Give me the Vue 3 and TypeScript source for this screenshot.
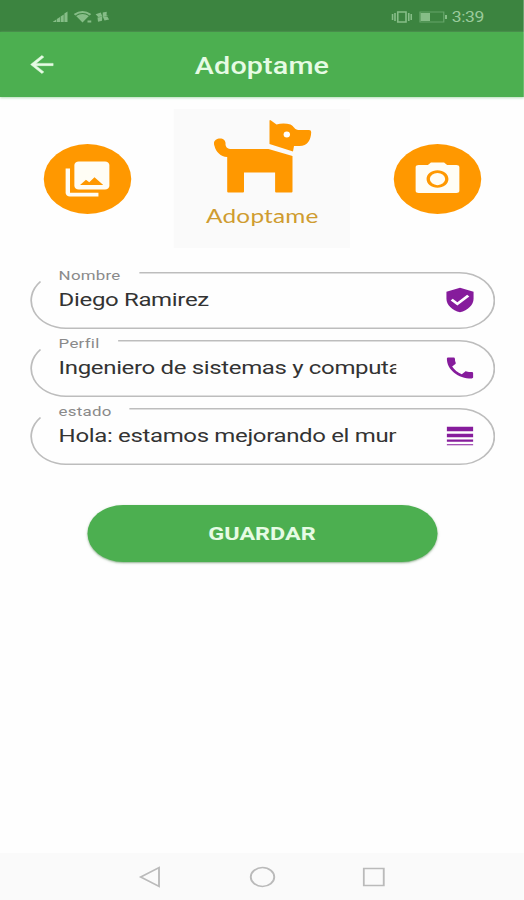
<script setup lang="ts">
interface Field {
  label: string
  value: string
  icon: string
  notch: number
}

const fields: Field[] = [
  {
    label: 'Nombre',
    value: 'Diego Ramirez',
    notch: 87.5,
    icon: 'M12 1.6 2.7 5v6c0 5.2 3.9 10 9.3 11.6 5.4-1.6 9.3-6.4 9.3-11.6V5L12 1.6zm-1.8 15.2-4.6-4.3 1.4-1.5 3.2 2.9 6.7-6.3L18.4 9l-8.2 7.8z',
  },
  {
    label: 'Perfil',
    value: 'Ingeniero de sistemas y computación',
    notch: 70.5,
    icon: 'M6.62 10.79c1.44 2.83 3.76 5.14 6.59 6.59l2.2-2.2c.27-.27.67-.36 1.02-.24 1.12.37 2.33.57 3.57.57.55 0 1 .45 1 1V20c0 .55-.45 1-1 1-9.39 0-17-7.61-17-17 0-.55.45-1 1-1h3.5c.55 0 1 .45 1 1 0 1.25.2 2.45.57 3.57.11.35.03.74-.25 1.02l-2.2 2.2z',
  },
  {
    label: 'estado',
    value: 'Hola: estamos mejorando el mundo',
    notch: 79.5,
    icon: 'M3 17h18v-2H3v2zm0 3h18v-1H3v1zm0-7h18v-3H3v3zm0-9v4h18V4H3z',
  },
]

const outline = (notch: number): string =>
  `M${notch} .7H343.5A28 27.8 0 0 1 343.5 56.3H28.7A28 27.8 0 0 1 8.4 9.6`
</script>

<template>
  <div class="viewport">
    <div class="screen">
      <div class="status">
        <div class="group">
          <svg width="13" height="13" viewBox="0 0 13 13">
            <path d="M0 12 3 9.5V12zM3.5 9 6 7v5H3.5zM6.5 6.4 9 4.4V12H6.5zM9.5 3.6 12 1.5V12H9.5z" />
          </svg>
          <svg class="wifi" width="15" height="14" viewBox="0 0 15 14">
            <path d="M0 4Q7 -2 14 4L12.8 5.4Q7 .8 1.2 5.4zM1.9 6Q7 1.8 12.1 6L7 12.5zM11 10.5h3v2h-3z" />
          </svg>
          <svg class="fan" width="12" height="12" viewBox="0 0 12 12">
            <path d="M.5 3.2 4.6 1.6 5.9 5.4 2.6 6zM6.2 1.5 9.4.8 9.2 4.4 11 4.8 6.2 5.4zM6.2 5.6 9.8 5.4 11.3 8.6 7.6 9.6zM2 6.6 5.8 5.8 5.6 9.8 2.4 10.8z" />
          </svg>
        </div>
        <div class="group">
          <svg width="17" height="14" viewBox="0 0 17 14">
            <path d="M1 4v6M3 3v8M14 3v8M16 4v6M5.2 2h6.6v10H5.2z" class="line" />
          </svg>
          <svg class="battery" width="23" height="12" viewBox="0 0 23 12">
            <path d="M1 1h19v10H1z" class="thin" /><path d="M1.5 2H9v8H1.5zM21 4h1.6v4H21z" />
          </svg>
          <span class="clock">3:39</span>
        </div>
      </div>
      <header class="appbar">
        <svg class="back" viewBox="0 0 24 24">
          <path d="M20 11H7.83l5.59-5.59L12 4l-8 8 8 8 1.41-1.41L7.83 13H20v-2z" />
        </svg>
        <h1>Adoptame</h1>
      </header>
      <main>
        <section class="hero">
          <button class="round" aria-label="Galería">
            <svg viewBox="0 0 24 24">
              <path d="M22 16V4c0-1.1-.9-2-2-2H8c-1.1 0-2 .9-2 2v12c0 1.1.9 2 2 2h12c1.1 0 2-.9 2-2zM8.6 15.4l2.7-3 1.5 1.4L15.2 11l4 4.4zM2 6v14c0 1.1.9 2 2 2h13v-2.2H4V6H2z" />
            </svg>
          </button>
          <div class="logo">
            <svg width="80" height="76" viewBox="0 0 100 76" preserveAspectRatio="none">
              <path d="M2 27C0 22 4 19.5 7.5 19.5C11 19.5 13.5 22 13 25C13 28 15 30 19 30H56L80 37V72.5Q80 73.5 79 73.5H63.6Q62.6 73.5 62.6 72.5V53.5H31.5V72.5Q31.5 73.5 30.5 73.5H15.7Q14.7 73.5 14.7 72.5V38C8 37.5 3.5 33 2 27z" />
              <path d="M57 2Q57 .5 58.5 1.5L64 5.5Q71 3.5 78 5.5C81.5 7 82 11 86 11H96.5Q98.7 11 98.7 13C98.5 21 95 27 87 27H81.5L80.5 32.5L57 25z" />
              <ellipse cx="74.3" cy="15.6" rx="3.2" ry="3" class="eye" />
            </svg>
            <span>Adoptame</span>
          </div>
          <button class="round" aria-label="Cámara">
            <svg viewBox="0 0 24 24">
              <path d="M9 2.6 7.6 4H3.4C2.6 4 2 4.5 2 5.3v13.4c0 .8.6 1.3 1.4 1.3h17.2c.8 0 1.4-.5 1.4-1.3V5.3C22 4.5 21.4 4 20.6 4h-4.2L15 2.6H9zm3 14.4c-2.76 0-5-2.24-5-5s2.24-5 5-5 5 2.24 5 5-2.24 5-5 5z" />
              <circle cx="12" cy="12" r="3.5" />
            </svg>
          </button>
        </section>
        <form class="fields">
          <div v-for="field in fields" :key="field.label" class="field">
            <svg class="outline" width="372" height="57" viewBox="0 0 372 57">
              <path :d="outline(field.notch)" />
            </svg>
            <div class="copy">
              <label>{{ field.label }}</label>
              <div class="value">{{ field.value }}</div>
            </div>
            <svg class="icon" viewBox="0 0 24 24"><path :d="field.icon" /></svg>
          </div>
        </form>
        <button class="save">GUARDAR</button>
      </main>
      <nav>
        <svg width="18" height="22" viewBox="0 0 18 22"><path d="M16.2 1.7v18.6L1.5 11z" /></svg>
        <svg width="22" height="22" viewBox="0 0 22 22"><circle cx="11" cy="11" r="9.4" /></svg>
        <svg width="18" height="22" viewBox="0 0 18 22"><path d="M1 2.5h16v17H1z" /></svg>
      </nav>
    </div>
  </div>
</template>

<style>
body {
  margin: 0;
  background: #fefefe;
}
</style>

<style scoped>
.viewport {
  width: 524px;
  height: 900px;
  overflow: hidden;
}
.screen {
  display: flex;
  flex-direction: column;
  width: 419.2px;
  height: 900px;
  transform: scaleX(1.25);
  transform-origin: 0 0;
  background: #fefefe;
  font-family: Roboto, "Liberation Sans", sans-serif;
}
svg {
  display: block;
  flex: none;
}
button {
  border: 0;
  padding: 0;
  font-family: inherit;
}
.status {
  box-sizing: border-box;
  display: flex;
  justify-content: space-between;
  align-items: center;
  height: 32px;
  padding: 1px 32px 0 42px;
  background: #3c8440;
  color: #9bcb9c;
  fill: #86bd87;
}
.group {
  display: flex;
  align-items: center;
}
.wifi {
  margin-left: 3.5px;
}
.fan {
  margin-left: 2.5px;
}
.line,
.thin {
  fill: none;
  stroke: #86bd87;
  stroke-width: 1.3;
}
.thin {
  stroke: #65a468;
  stroke-width: 1;
}
.battery {
  margin: 0 3px 0 5px;
}
.clock {
  font-size: 14px;
  line-height: 16px;
  letter-spacing: -0.3px;
}
.appbar {
  display: grid;
  grid-template-columns: 60px 1fr 60px;
  align-items: center;
  height: 65px;
  background: #4caf50;
  box-shadow: 0 1px 2px #b5dfb8;
}
.back {
  width: 27px;
  height: 27px;
  margin-left: 19.5px;
  fill: #e6fbe4;
  stroke: #e6fbe4;
  stroke-width: 0.4;
}
h1 {
  margin: 0;
  padding-top: 4px;
  text-align: center;
  font-size: 23px;
  line-height: 28px;
  font-weight: 500;
  letter-spacing: 0.1px;
  color: #e6fbe4;
}
main {
  flex: 1;
  display: flex;
  flex-direction: column;
}
.hero {
  display: flex;
  justify-content: space-between;
  padding: 12px 34.6px 0 35.2px;
}
.round {
  display: flex;
  align-items: center;
  justify-content: center;
  width: 70px;
  height: 70px;
  margin-top: 35px;
  border-radius: 50%;
  background: #ff9800;
}
.round svg {
  width: 42px;
  height: 42px;
  fill: #fffdf5;
}
.logo {
  display: flex;
  flex-direction: column;
  align-items: center;
  width: 141px;
  height: 139px;
  background: #fafafa;
}
.logo svg {
  margin-top: 10px;
  fill: #ff9800;
}
.logo .eye {
  fill: #fff;
}
.logo span {
  margin-top: 9px;
  font-family: Lato, sans-serif;
  font-size: 19.5px;
  line-height: 24px;
  letter-spacing: 0.15px;
  color: #cf9c30;
}
.fields {
  display: flex;
  flex-direction: column;
  gap: 11px;
  padding: 24px 23.6px 0;
}
.field {
  position: relative;
  display: flex;
  justify-content: space-between;
  height: 57px;
}
.outline {
  position: absolute;
  inset: 0;
  fill: none;
  stroke: #bdbdbd;
  stroke-width: 1.4;
}
.copy {
  width: 270.4px;
  margin-left: 23.3px;
}
label {
  display: block;
  margin-top: -5px;
  font-size: 13.5px;
  line-height: 16px;
  letter-spacing: 0.2px;
  color: #8a8a8a;
}
.value {
  margin-top: 3.5px;
  overflow: hidden;
  white-space: nowrap;
  font-size: 19.2px;
  line-height: 26px;
  letter-spacing: -0.27px;
  color: #333;
}
.icon {
  width: 28px;
  height: 28px;
  margin: 14px 13.6px 0 0;
  fill: #861c9c;
}
.save {
  align-self: center;
  width: 280px;
  height: 57px;
  margin-top: 40px;
  border-radius: 29px;
  background: #4caf50;
  box-shadow: 0 1px 2px rgba(50, 110, 50, 0.55);
  color: #e6fbe4;
  font-size: 18.7px;
  font-weight: 700;
}
nav {
  display: flex;
  justify-content: space-between;
  align-items: center;
  height: 47px;
  padding: 0 111px;
  background: #fafafa;
  fill: none;
  stroke: #bababa;
  stroke-width: 1.5;
}
</style>
